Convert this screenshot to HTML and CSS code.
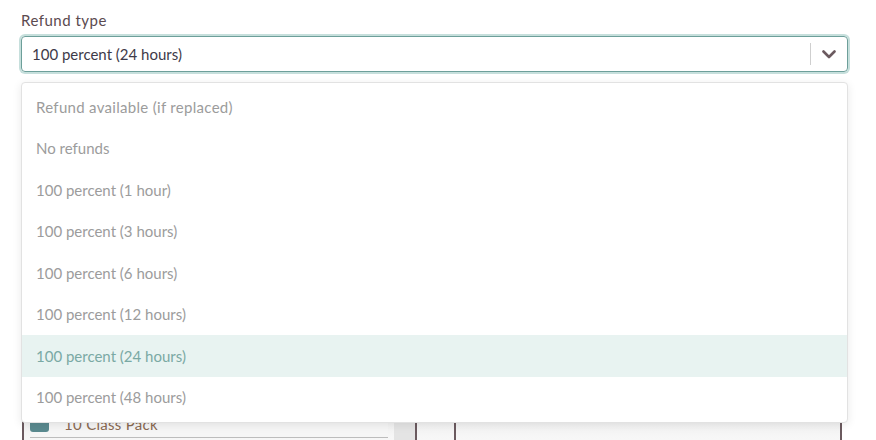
FILE: index.html
```html
<!DOCTYPE html>
<html>
<head>
<meta charset="utf-8">
<link rel="stylesheet" href="styles.css">
</head>
<body>
<div class="page">
  <div class="field">
    <label class="label">Refund type</label>
    <div class="select">
      <span class="value">100 percent (24 hours)</span>
      <span class="sep"></span>
      <span class="chev">
        <svg width="14" height="9" viewBox="0 0 14 9"><path d="M1.5 1.5 L7 7 L12.5 1.5" fill="none" stroke="#6b5a5f" stroke-width="2.6" stroke-linecap="round" stroke-linejoin="round"/></svg>
      </span>
    </div>
    <div class="menu">
      <div class="opt first">Refund available (if replaced)</div>
      <div class="opt">No refunds</div>
      <div class="opt">100 percent (1 hour)</div>
      <div class="opt">100 percent (3 hours)</div>
      <div class="opt">100 percent (6 hours)</div>
      <div class="opt">100 percent (12 hours)</div>
      <div class="opt active">100 percent (24 hours)</div>
      <div class="opt">100 percent (48 hours)</div>
    </div>
  </div>
  <div class="behind">
    <div class="col-main">
      <div class="pack-row">
        <span class="check"></span>
        <span class="pack-name">10 Class Pack</span>
      </div>
    </div>
    <div class="col-gray"></div>
    <div class="col-mid"></div>
    <div class="col-right"></div>
  </div>
</div>
</body>
</html>
```
FILE: styles.css
```css
html, body {
  margin: 0;
  padding: 0;
  background: #ffffff;
  font-family: "Lato", "Open Sans", sans-serif;
}
.page {
  width: 876px;
  height: 440px;
  overflow: hidden;
  position: relative;
}
.field {
  position: relative;
  padding: 10px 28px 0 21px;
}
.label {
  display: block;
  font-size: 15px;
  color: #5b4a50;
  line-height: 20px;
  height: 26px;
  letter-spacing: 0.5px;
}
.select {
  height: 36px;
  box-sizing: border-box;
  border: 1px solid #6d9f9a;
  border-radius: 4px;
  box-shadow: 0 0 0 2px #c6dfdc;
  display: flex;
  align-items: center;
  padding-left: 10px;
}
.value {
  flex: 1;
  font-size: 15px;
  color: #3e3a48;
}
.sep {
  width: 1px;
  height: 22px;
  background: #cfcfcf;
}
.chev {
  width: 36px;
  display: flex;
  justify-content: center;
  align-items: center;
  padding-top: 1px;
}
.menu {
  position: absolute;
  left: 21px;
  right: 28px;
  top: 82px;
  background: #fff;
  border: 1px solid #e2e2e2;
  border-radius: 4px;
  box-shadow: 0 2px 10px rgba(0,0,0,0.09);
  padding: 3px 0 4px;
  z-index: 5;
}
.opt {
  height: 41.5px;
  display: flex;
  align-items: center;
  padding-left: 14px;
  font-size: 15px;
  color: #9c9c9c;
}
.opt.first {
  letter-spacing: 0.3px;
}
.opt.active {
  background: #e8f3f1;
  color: #7aa9a4;
}
.behind {
  position: absolute;
  top: 410px;
  left: 22px;
  right: 34px;
  height: 32px;
  display: flex;
  background: linear-gradient(#eeeeee, #f8f8f8);
  z-index: 1;
}
.col-main {
  width: 372px;
  border-left: 2px solid #6b5a5f;
  box-sizing: border-box;
  padding: 0 6px 0 6px;
}
.pack-row {
  height: 27px;
  display: flex;
  align-items: center;
  border-bottom: 1px solid #bdbdbd;
  background: #f6f6f6;
}
.check {
  width: 19px;
  height: 17px;
  border-radius: 3px;
  background: #5a8a8f;
}
.pack-name {
  margin-left: 15px;
  font-size: 15px;
  color: #8a6a52;
  letter-spacing: 0.3px;
}
.col-gray {
  width: 21px;
  background: #e4e4e4;
}
.col-mid {
  width: 37px;
  border-left: 2px solid #6b5a5f;
  border-right: 2px solid #6b5a5f;
}
.col-right {
  flex: 1;
  border-right: 2px solid #6b5a5f;
}
```
